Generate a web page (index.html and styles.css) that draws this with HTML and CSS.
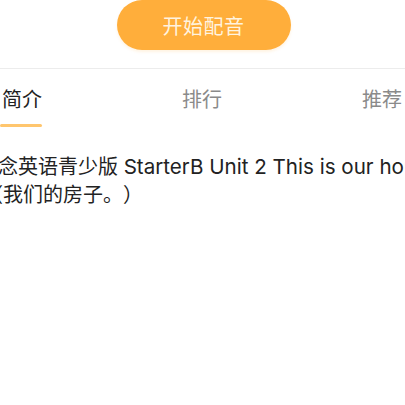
FILE: index.html
```html
<!DOCTYPE html>
<html lang="zh-CN">
<head>
    <meta charset="UTF-8">
    <meta name="viewport" content="width=device-width, initial-scale=1.0">
    <title>配音详情</title>
    <link rel="stylesheet" href="styles.css">
</head>
<body>

    <div class="page">
        <div class="action-bar">
            <button class="dub-btn">开始配音</button>
        </div>

        <div class="tabs">
            <div class="tab active">简介</div>
            <div class="tab">排行</div>
            <div class="tab">推荐</div>
        </div>

        <div class="intro">
            <p class="intro-line first">新概念英语青少版 <span class="latin">StarterB Unit 2 This is our house</span></p>
            <p class="intro-line second">（我们的房子。）</p>
        </div>
    </div>

</body>
</html>
```

FILE: styles.css
```css
body {
    margin: 0;
    padding: 0;
    background-color: #fff;
    font-family: Inter, "Noto Sans CJK SC", sans-serif;
    overflow: hidden;
}
.page {
    width: 405px;
    height: 405px;
    overflow: hidden;
}
.action-bar {
    display: flex;
    justify-content: center;
    padding-bottom: 18px;
    border-bottom: 1px solid #ececec;
}
.dub-btn {
    width: 174px;
    height: 50px;
    margin-left: 2px;
    border: none;
    border-radius: 25px;
    background-color: #ffae3b;
    color: #fff3df;
    font-family: "Noto Sans CJK SC", sans-serif;
    font-size: 20px;
    letter-spacing: 0.5px;
    box-shadow: 0 2px 3px rgba(255, 174, 59, 0.15);
}
.tabs {
    display: flex;
    justify-content: space-between;
    padding: 16px 3px 0 2px;
}
.tab {
    position: relative;
    padding-bottom: 14px;
    font-family: "Noto Sans CJK SC", sans-serif;
    font-size: 20px;
    line-height: 28px;
    color: #8a8a8a;
}
.tab.active {
    color: #222;
}
.tab.active::after {
    content: "";
    position: absolute;
    left: -2px;
    right: 0;
    bottom: 0;
    height: 3px;
    border-radius: 2px;
    background-color: #ffc66e;
}
.intro {
    padding-top: 26px;
}
.intro-line {
    margin: 0;
    font-size: 20px;
    line-height: 28px;
    color: #222;
    white-space: nowrap;
    text-spacing-trim: space-all;
}
.intro-line .latin {
    font-size: 20.6px;
}
.intro-line.first {
    margin-left: -42px;
}
.intro-line.second {
    margin-left: -17px;
}
```
